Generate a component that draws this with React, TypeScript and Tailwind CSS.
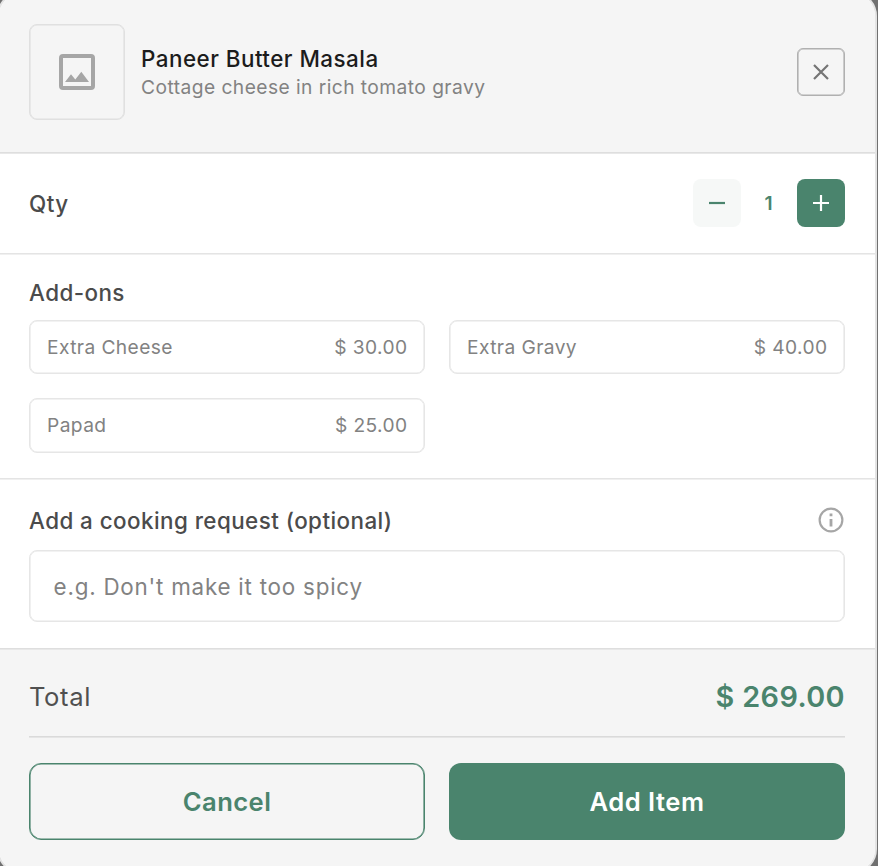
import type { ReactNode } from "react";

const addOns = [
  { name: "Extra Cheese", price: "$ 30.00" },
  { name: "Extra Gravy", price: "$ 40.00" },
  { name: "Papad", price: "$ 25.00" },
];

function Heading({ children }: { children: ReactNode }) {
  return (
    <h2 className="text-[22.4px] leading-[32px] font-medium tracking-[0.44px] text-[#4b4b4b]">
      {children}
    </h2>
  );
}

export default function App() {
  return (
    <div className="h-[866px] w-[878px] overflow-hidden bg-[#707070] font-['Inter',sans-serif]">
      <div className="-mt-[9px] -ml-[3px] flex h-[883px] w-[880px] flex-col overflow-hidden rounded-[25px] border-2 border-[#e4e4e4] bg-white">
        <header className="flex h-[160px] shrink-0 items-start border-b border-[#dedede] bg-[#f5f5f5] px-[30px] pt-[31px]">
          <div className="flex size-24 items-center justify-center rounded-lg border border-[#e0e0e0] shadow-[inset_0_0_0_0.6px_#e0e0e0]">
            <svg viewBox="0 0 36 36" className="size-9" fill="none">
              <rect x="2" y="2" width="32" height="32" rx="2" stroke="#a6a6a6" strokeWidth="4" />
              <path d="M6 28 12 20.2l4.3 5.2L22.3 17.7 30 28Z" fill="#a6a6a6" />
            </svg>
          </div>
          <div className="ml-4 flex-1 pt-[19px]">
            <h1 className="text-[22.4px] leading-[32px] font-medium tracking-[0.48px] text-[#1c1c1c]">
              Paneer Butter Masala
            </h1>
            <p className="text-[19.2px] leading-[25px] tracking-[0.45px] text-[#828282]">
              Cottage cheese in rich tomato gravy
            </p>
          </div>
          <button className="mt-6 flex size-12 items-center justify-center rounded-md border border-[#b0b0b0] shadow-[inset_0_0_0_0.6px_#b0b0b0]" aria-label="Close">
            <svg viewBox="0 0 16 16" className="size-4" stroke="#757575" strokeWidth="2.2">
              <path d="M1 1 15 15M15 1 1 15" />
            </svg>
          </button>
        </header>

        <section className="flex h-[101px] shrink-0 items-start justify-between border-t border-b border-t-[#e8e8e8] border-b-[#e4e4e4] px-[30px] pt-[25px]">
          <div className="pt-[9px]">
            <Heading>Qty</Heading>
          </div>
          <div className="flex items-center">
            <button className="flex size-12 items-center justify-center rounded-lg bg-[#f6f8f7]" aria-label="Decrease">
              <svg viewBox="0 0 16 16" className="size-4" stroke="#4a846d" strokeWidth="2.2">
                <path d="M0 8H16" />
              </svg>
            </button>
            <span className="w-14 pt-px pr-px text-center text-[19.2px] font-semibold text-[#4a846d]">1</span>
            <button className="flex size-12 items-center justify-center rounded-lg bg-[#4a846d]" aria-label="Increase">
              <svg viewBox="0 0 16 16" className="size-4" stroke="#fff" strokeWidth="2.2">
                <path d="M0 8H16M8 0V16" />
              </svg>
            </button>
          </div>
        </section>

        <section className="h-[225px] shrink-0 border-t border-b border-t-[#f0f0f0] border-b-[#e4e4e4] px-[30px] pt-[22px]">
          <Heading>Add-ons</Heading>
          <div className="mt-[11px] grid grid-cols-2 gap-6">
            {addOns.map((item) => (
              <div
                key={item.name}
                className="flex h-[54.4px] items-center justify-between rounded-lg border border-[#e6e6e6] pr-[16.5px] pl-[17px] text-[19.2px] tracking-[0.4px] text-[#828282] shadow-[inset_0_0_0_0.6px_#e6e6e6]"
              >
                <span>{item.name}</span>
                <span>{item.price}</span>
              </div>
            ))}
          </div>
        </section>

        <section className="h-[170px] shrink-0 border-t border-b border-t-[#f0f0f0] border-b-[#dedede] px-[30px] pt-[25px]">
          <div className="flex items-center justify-between">
            <Heading>Add a cooking request (optional)</Heading>
            <svg viewBox="0 0 24 24" className="-mt-[3px] mr-[1.5px] size-[26px]" fill="none" stroke="#a6a6a6" strokeWidth="2">
              <circle cx="12" cy="12" r="10.5" />
              <path d="M12 11v7M12 6v2.5" strokeWidth="2.6" />
            </svg>
          </div>
          <input
            className="mt-[13px] h-[72px] w-full rounded-lg border border-[#e6e6e6] px-[23.6px] text-[22.4px] tracking-[0.77px] shadow-[inset_0_0_0_0.6px_#e6e6e6] placeholder:text-[#828282]"
            placeholder="e.g. Don't make it too spicy"
          />
        </section>

        <footer className="flex-1 border-t border-[#e8e8e8] bg-[#f5f5f5] px-[30px] pt-[26px]">
          <div className="flex h-[61px] items-start justify-between border-b border-[#dadada] shadow-[0_0.6px_0_#dadada]">
            <span className="text-[25.6px] leading-[42px] tracking-[0.6px] text-[#505050]">Total</span>
            <span className="text-[28.8px] leading-[42px] font-semibold tracking-[0.4px] text-[#4a846d]">$ 269.00</span>
          </div>
          <div className="mt-[26px] grid grid-cols-2 gap-6">
            <button className="h-[77px] rounded-xl border border-[#4a846d] pt-0.5 text-[25.6px] font-semibold tracking-[0.45px] text-[#4a846d] shadow-[inset_0_0_0_0.6px_#4a846d]">
              Cancel
            </button>
            <button className="h-[77px] rounded-xl bg-[#4a846d] pt-0.5 text-[25.6px] font-semibold tracking-[0.5px] text-white">
              Add Item
            </button>
          </div>
        </footer>
      </div>
    </div>
  );
}
